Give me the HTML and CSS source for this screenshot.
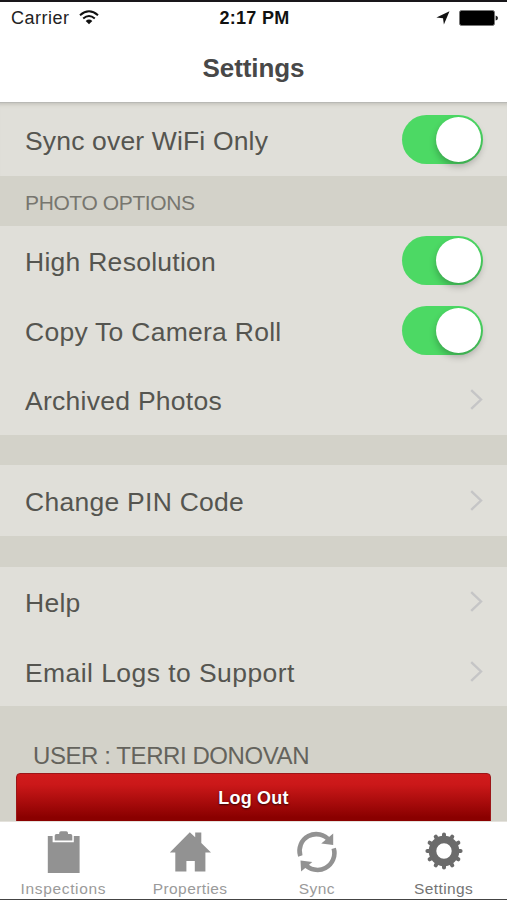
FILE: index.html
```
<!DOCTYPE html>
<html lang="en">

<head>
  <meta charset="UTF-8">
  <meta name="viewport" content="width=device-width, initial-scale=1.0">
  <title>Settings</title>
  <link rel="stylesheet" href="styles.css">
</head>

<body>
  <header class="header">
    <div class="status">
      <div class="status__left">
        <span class="carrier">Carrier</span>
        <svg class="wifi" width="20" height="15" viewBox="0 0 20 15">
          <g fill="none" stroke="#111" stroke-width="2">
            <path d="M1 5.2Q10-2.6 19 5.2" />
            <path d="M4.2 8.6Q10 3.4 15.8 8.6" />
          </g>
          <path d="M6.7 10.9Q10 8.3 13.3 10.9L10 14.3z" fill="#111" />
        </svg>
      </div>
      <div class="status__time">2:17 PM</div>
      <div class="status__right">
        <svg class="arrow" width="14" height="14" viewBox="0 0 14 14">
          <path d="M13.5.3L7.9 13.4 7 7.2.4 6.4z" fill="#111" />
        </svg>
        <svg class="battery" width="39" height="16" viewBox="0 0 39 16">
          <rect x=".5" y=".5" width="35" height="15" rx="2" fill="#000" stroke="#777" />
          <path d="M36.6 5.5Q39 6 39 8T36.6 10.5z" fill="#222" />
        </svg>
      </div>
    </div>
    <h1 class="header__title">Settings</h1>
  </header>

  <main class="settings">
    <div class="row row--first">
      <span class="label label--sync">Sync over WiFi Only</span>
      <div class="toggle"><div class="toggle__knob"></div></div>
    </div>
    <h2 class="section">PHOTO OPTIONS</h2>
    <div class="row">
      <span class="label">High Resolution</span>
      <div class="toggle"><div class="toggle__knob"></div></div>
    </div>
    <div class="row">
      <span class="label">Copy To Camera Roll</span>
      <div class="toggle"><div class="toggle__knob"></div></div>
    </div>
    <div class="row">
      <span class="label">Archived Photos</span>
      <svg class="chevron" width="13" height="21" viewBox="0 0 13 21"><path d="M1.2 1.2L11 10.5 1.2 19.8" /></svg>
    </div>
    <div class="gap"></div>
    <div class="row row--single">
      <span class="label">Change PIN Code</span>
      <svg class="chevron" width="13" height="21" viewBox="0 0 13 21"><path d="M1.2 1.2L11 10.5 1.2 19.8" /></svg>
    </div>
    <div class="gap gap--help"></div>
    <div class="row">
      <span class="label">Help</span>
      <svg class="chevron" width="13" height="21" viewBox="0 0 13 21"><path d="M1.2 1.2L11 10.5 1.2 19.8" /></svg>
    </div>
    <div class="row">
      <span class="label label--email">Email Logs to Support</span>
      <svg class="chevron" width="13" height="21" viewBox="0 0 13 21"><path d="M1.2 1.2L11 10.5 1.2 19.8" /></svg>
    </div>
    <div class="account">
      <div class="user">USER : TERRI DONOVAN</div>
      <button class="logout">Log Out</button>
    </div>
  </main>

  <nav class="tabs">
    <div class="tab">
      <svg width="44" height="44" viewBox="0 0 44 44" fill="#929292">
        <path d="M6.8 7h4.8v6.2h21.2V7h5.8v37.4H6.8z" />
        <path d="M13.7 11.5V6.8q0-1.7 1.7-1.7h2.8V4q0-1.8 1.8-1.8h5.2q1.8 0 1.8 1.8v1.1h2.6q1.7 0 1.7 1.7v4.7z" />
      </svg>
      <span class="tab__name tab__name--wide">Inspections</span>
    </div>
    <div class="tab">
      <svg width="44" height="44" viewBox="0 0 44 44" fill="#929292">
        <path d="M21.8 3.2l5.4 5V3.6h6.1v10.3L43 23.6h-5.6v19H26.8V32h-8.4v10.6H7.3v-19H1.8z" />
      </svg>
      <span class="tab__name">Properties</span>
    </div>
    <div class="tab">
      <svg width="44" height="44" viewBox="0 0 44 44">
        <g fill="none" stroke="#929292" stroke-width="4.6">
          <path d="M5.3 27A16.8 16.8 0 0 1 34.5 11.5" />
          <path d="M38.7 19.4A16.8 16.8 0 0 1 9.5 34.7" />
        </g>
        <path d="M38.2 4.4v11.7l-12-1.6zM5.5 31.4l11.8 1.5L6.1 42.4z" fill="#929292" />
      </svg>
      <span class="tab__name">Sync</span>
    </div>
    <div class="tab tab--active">
      <svg width="44" height="44" viewBox="-22 -22 44 44">
        <circle r="11.5" fill="none" stroke="#6b6b6b" stroke-width="7.6" />
        <path id="teeth" d="M0-16.6V-14M0 16.6V14M16.6 0H14M-16.6 0H-14" stroke="#6b6b6b" stroke-width="4" stroke-linecap="round" />
        <use href="#teeth" transform="rotate(30)" />
        <use href="#teeth" transform="rotate(60)" />
      </svg>
      <span class="tab__name">Settings</span>
    </div>
  </nav>
</body>

</html>
```
FILE: styles.css
```
* {
  box-sizing: border-box;
}

body {
  margin: 0;
  width: 507px;
  height: 900px;
  overflow: hidden;
  display: flex;
  flex-direction: column;
  font-family: "Liberation Sans", Arial, sans-serif;
  background-color: #d3d2c9;
}

.header {
  height: 103px;
  flex: none;
  background-color: #fff;
  border-top: 2px solid #19171a;
  border-bottom: 1px solid #b9b9b5;
}

.status {
  height: 32px;
  padding: 0 9px 0 11px;
  display: grid;
  grid-template-columns: 1fr auto 1fr;
  align-items: center;
  font-size: 18px;
  color: #222;
}

.status__left,
.status__right {
  display: flex;
  align-items: center;
}

.status__left {
  gap: 9px;
}

.carrier {
  letter-spacing: 0.5px;
}

.status__right {
  justify-content: flex-end;
  gap: 9px;
}

.wifi,
.arrow {
  margin-top: -1px;
}

.status__time {
  padding-top: 1px;
  font-weight: bold;
  letter-spacing: 0.3px;
  color: #111;
}

.header__title {
  margin: 19px 0 0;
  font-size: 26px;
  line-height: 30px;
  letter-spacing: -0.1px;
  text-align: center;
  color: #484848;
}

.settings {
  flex: 1;
  min-height: 0;
  overflow: hidden;
}

.row {
  height: 69.7px;
  padding: 0 24px 0 25px;
  display: flex;
  align-items: center;
  justify-content: space-between;
  background-color: #e0dfd9;
}

.row--first {
  height: 73px;
  box-shadow: inset 0 5px 4px -4px #bdbcb5;
}

.row--single {
  height: 71px;
}

.label {
  padding-top: 3px;
  font-size: 26.5px;
  letter-spacing: 0.27px;
  color: #555550;
}

.label--sync {
  padding-top: 4px;
  letter-spacing: 0.16px;
}

.label--email {
  letter-spacing: 0.43px;
}

.toggle {
  width: 81px;
  height: 49px;
  margin-bottom: 1px;
  padding: 2px;
  display: flex;
  justify-content: flex-end;
  border-radius: 25px;
  background-color: #4cd964;
}

.toggle__knob {
  width: 45px;
  height: 45px;
  border-radius: 50%;
  background-color: #fff;
  box-shadow: 0 4px 7px rgba(0, 0, 0, 0.25);
}

.chevron {
  margin-bottom: 1px;
  fill: none;
  stroke: #c5c5c6;
  stroke-width: 2.4;
}

.section {
  margin: 0;
  height: 50px;
  padding: 2px 25px 0;
  font-size: 21px;
  font-weight: normal;
  line-height: 50px;
  letter-spacing: -0.38px;
  color: #77766f;
}

.gap {
  height: 30px;
}

.gap--help {
  height: 31px;
}

.account {
  padding: 35px 16px 0;
}

.user {
  padding-left: 17px;
  height: 32px;
  line-height: 30px;
  font-size: 24px;
  letter-spacing: -0.42px;
  color: #64635c;
}

.logout {
  display: block;
  width: 475px;
  height: 55px;
  padding: 0 0 4px;
  border: 1px solid #9c1618;
  border-radius: 4px;
  background: linear-gradient(#d01b1c, #cb1819 20%, #8a0000 82%);
  font-family: inherit;
  font-size: 18px;
  font-weight: bold;
  letter-spacing: 0.2px;
  color: #fff;
  text-shadow: 0 1px 2px rgba(0, 0, 0, 0.7);
}

.tabs {
  flex: none;
  height: 79px;
  display: grid;
  grid-template-columns: repeat(4, 1fr);
  background-color: #fff;
  border-top: 1px solid #e4e2dc;
  border-bottom: 1px solid #444;
}

.tab {
  display: flex;
  flex-direction: column;
  align-items: center;
  padding-top: 7px;
  color: #9a9a9a;
}

.tab__name {
  margin-top: 7px;
  font-size: 15.5px;
  line-height: 18px;
  letter-spacing: 0.4px;
}

.tab__name--wide {
  letter-spacing: 0.65px;
}

.tab--active {
  color: #747474;
}
```
